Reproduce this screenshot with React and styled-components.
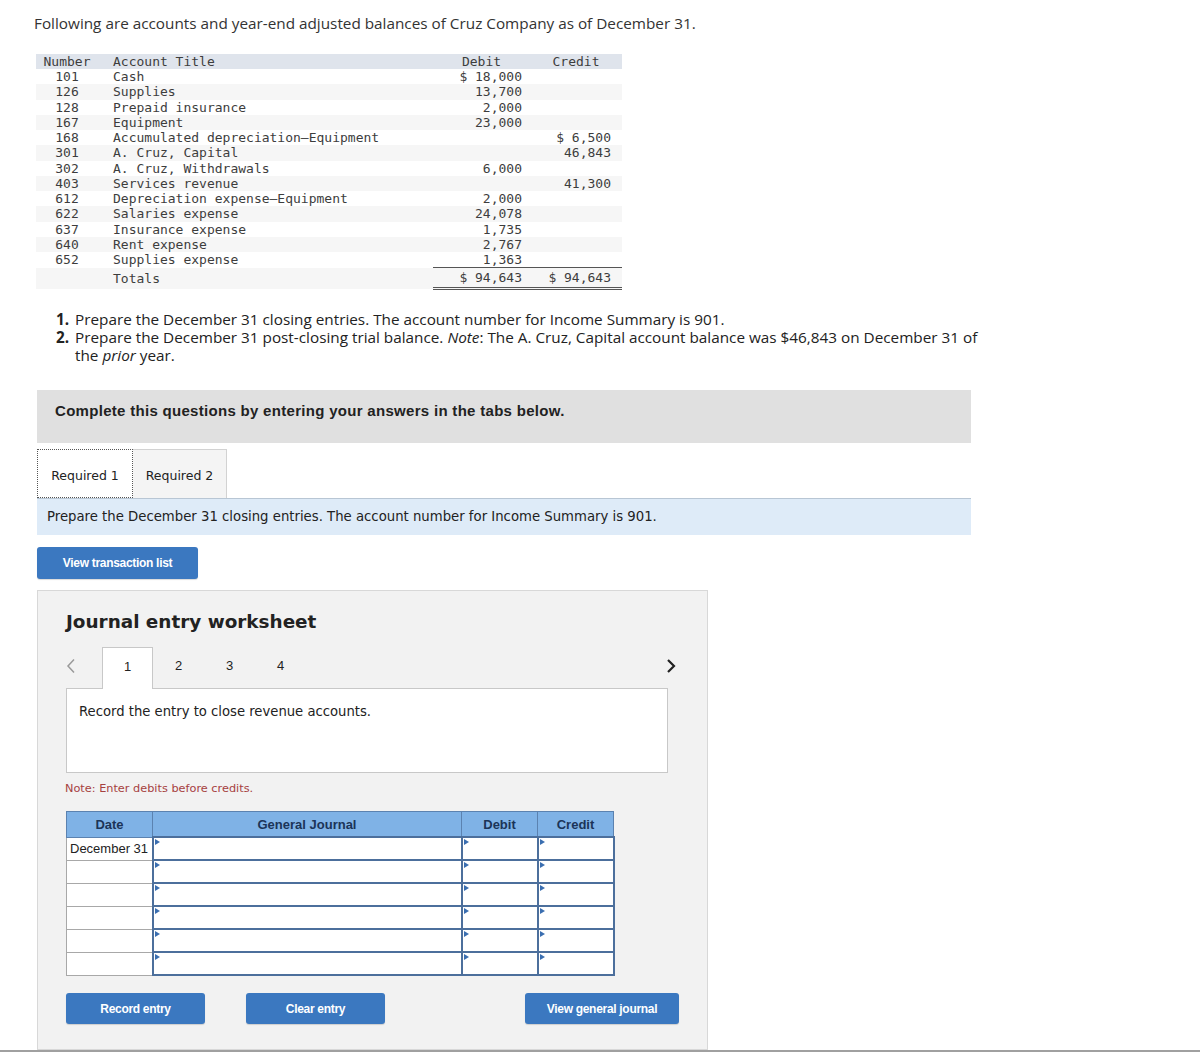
import React from "react";
import styled, { createGlobalStyle } from "styled-components";

const GlobalStyle = createGlobalStyle`
  html, body {
    margin: 0;
    padding: 0;
    background: #fff;
  }
  body {
    font-family: "Open Sans", "Liberation Sans", sans-serif;
    color: #333;
  }
`;

const accounts = [
  ["101", "Cash", "$ 18,000", ""],
  ["126", "Supplies", "13,700", ""],
  ["128", "Prepaid insurance", "2,000", ""],
  ["167", "Equipment", "23,000", ""],
  ["168", "Accumulated depreciation\u2014Equipment", "", "$ 6,500"],
  ["301", "A. Cruz, Capital", "", "46,843"],
  ["302", "A. Cruz, Withdrawals", "6,000", ""],
  ["403", "Services revenue", "", "41,300"],
  ["612", "Depreciation expense\u2014Equipment", "2,000", ""],
  ["622", "Salaries expense", "24,078", ""],
  ["637", "Insurance expense", "1,735", ""],
  ["640", "Rent expense", "2,767", ""],
  ["652", "Supplies expense", "1,363", ""],
];

const Page = styled.div`
  padding: 14px 0 0 37px;
  width: 934px;
`;

const Intro = styled.p`
  margin: 0 0 0 -3px;
  font-size: 15.3px;
  line-height: 18px;
  color: #333;
`;

const Trial = styled.table`
  margin: 22px 0 0 -1px;
  width: 586px;
  border-collapse: collapse;
  font-family: "DejaVu Sans Mono", "Liberation Mono", monospace;
  font-size: 13px;
  color: #3d3d3d;

  th,
  td {
    padding: 0;
    height: 15.25px;
    line-height: 15px;
    white-space: pre;
    font-weight: normal;
  }
  thead th {
    background: #dfe4ec;
    height: 15px;
  }
  tbody tr:nth-child(even) td {
    background: #f6f6f6;
  }
`;

const Cell = styled.td`
  text-align: ${(p) => (p.$kind === "num" || p.$kind === "head" ? "center" : p.$kind === "title" ? "left" : "right")};
  width: ${(p) => (p.$kind === "num" ? "62px" : p.$kind === "debit" ? "97px" : p.$kind === "credit" ? "92px" : "auto")};
  padding-left: ${(p) => (p.$kind === "title" ? "15px" : "0")} !important;
  padding-right: ${(p) => (p.$kind === "debit" ? "8px" : p.$kind === "credit" ? "11px" : "0")} !important;
  box-sizing: border-box;
`;

const TotalCell = styled(Cell)`
  height: 21px !important;
  border-top: 1px solid #555;
  border-bottom: 3px double #555;
`;

const TotalLabel = styled(Cell)`
  height: 21px !important;
`;

const Steps = styled.ol`
  list-style: none;
  margin: 20px 0 0 19px;
  padding: 0;
  width: 930px;
  font-size: 15.3px;
  line-height: 18px;
  color: #222;
`;

const Step = styled.li`
  display: grid;
  grid-template-columns: 19px 1fr;
`;

const StepNum = styled.b`
  font-weight: 700;
`;

const Banner = styled.div`
  margin-top: 26px;
  height: 53px;
  box-sizing: border-box;
  padding: 12px 18px 0;
  background: #e0e0e0;
  font-family: "Liberation Sans", Arial, sans-serif;
  font-weight: 700;
  font-size: 15px;
  letter-spacing: 0.3px;
  line-height: 18px;
  color: #222;
`;

const TabBar = styled.div`
  display: flex;
  margin-top: 6px;
`;

const ReqTab = styled.div`
  width: ${(p) => (p.$active ? "96px" : "94px")};
  height: 49px;
  box-sizing: border-box;
  display: flex;
  align-items: center;
  justify-content: center;
  padding-top: 3px;
  font-family: "DejaVu Sans", Verdana, sans-serif;
  font-size: 12.5px;
  color: #222;
  background: ${(p) => (p.$active ? "#fff" : "#f4f4f4")};
  border: ${(p) => (p.$active ? "1px dotted #555" : "1px solid #d2d2d2")};
  border-left: ${(p) => (p.$active ? "1px dotted #555" : "none")};
  border-bottom: ${(p) => (p.$active ? "1px dotted #555" : "none")};
`;

const InfoBar = styled.div`
  height: 37px;
  box-sizing: border-box;
  border-top: 1px solid #b8c6d4;
  background: #deebf8;
  padding-left: 10px;
  font-family: "DejaVu Sans", Verdana, sans-serif;
  font-size: 13.25px;
  line-height: 36px;
  color: #222;
`;

const ActionButton = styled.button`
  display: block;
  width: ${(p) => p.$w}px;
  height: ${(p) => p.$h || 31}px;
  margin-left: ${(p) => (p.$push ? "auto" : "0")};
  padding: 0;
  border: none;
  border-radius: 3px;
  background: #3b78c0;
  color: #fff;
  font-family: "Liberation Sans", Arial, sans-serif;
  font-weight: 700;
  font-size: 12px;
  letter-spacing: -0.3px;
  box-shadow: 0 1px 1px rgba(0, 0, 0, 0.15);
`;

const TopButton = styled(ActionButton)`
  margin-top: 12px;
`;

const Panel = styled.section`
  margin-top: 11px;
  width: 671px;
  box-sizing: border-box;
  background: #f2f2f2;
  border: 1px solid #d8d8d8;
  padding: 20px 28px 25px 28px;
`;

const PanelTitle = styled.h2`
  margin: 0;
  font-family: "DejaVu Sans", Verdana, sans-serif;
  font-size: 18.4px;
  line-height: 22px;
  font-weight: 700;
  color: #222;
`;

const NavRow = styled.div`
  display: flex;
  align-items: stretch;
  height: 41px;
  margin-top: 14px;
`;

const Arrow = styled.div`
  width: ${(p) => (p.$next ? "auto" : "36px")};
  margin-left: ${(p) => (p.$next ? "auto" : "0")};
  padding-right: ${(p) => (p.$next ? "3px" : "0")};
  padding-bottom: 4px;
  display: flex;
  align-items: center;
`;

const StepTab = styled.div`
  width: 51px;
  box-sizing: border-box;
  display: flex;
  align-items: center;
  justify-content: center;
  padding-bottom: 5px;
  font-family: "Liberation Sans", Arial, sans-serif;
  font-size: 13px;
  color: #222;
  position: relative;
  z-index: 1;
  background: ${(p) => (p.$active ? "#fff" : "transparent")};
  border: 1px solid ${(p) => (p.$active ? "#c8c8c8" : "transparent")};
  border-bottom: none;
  margin-bottom: ${(p) => (p.$active ? "-1px" : "0")};
`;

const EntryBox = styled.div`
  width: 602px;
  height: 85px;
  box-sizing: border-box;
  background: #fff;
  border: 1px solid #c8c8c8;
  padding: 14px 12px;
  font-family: "DejaVu Sans", Verdana, sans-serif;
  font-size: 13.2px;
  line-height: 18px;
  color: #222;
`;

const Note = styled.p`
  margin: 9px 0 0 -1px;
  font-family: "DejaVu Sans", Verdana, sans-serif;
  font-size: 11.3px;
  line-height: 14px;
  color: #a6413f;
`;

const Journal = styled.table`
  margin-top: 15px;
  width: 547px;
  border-collapse: collapse;
  font-family: "Liberation Sans", Arial, sans-serif;
  table-layout: fixed;

  th {
    height: 24px;
    padding: 0;
    background: #7fb2e6;
    border: 1px solid #5b82b0;
    color: #1b3458;
    font-size: 13px;
    font-weight: 700;
  }
  td {
    height: 21px;
    padding: 0;
    background: #fff;
  }
`;

const DateCell = styled.td`
  border: 1px solid #a8a8a8;
  padding-left: 3px !important;
  font-size: 13px;
  color: #222;
  text-align: left;
  white-space: nowrap;
`;

const EntryCell = styled.td`
  position: relative;
  border: 2px solid #4c6f9c;

  &::before {
    content: "";
    position: absolute;
    top: 1px;
    left: 1px;
    border-left: 5px solid #3a6eb0;
    border-top: 3px solid transparent;
    border-bottom: 3px solid transparent;
  }
`;

const ButtonRow = styled.div`
  display: flex;
  gap: 41px;
  margin-top: 17px;
`;

const BottomRule = styled.div`
  border-top: 2px solid #a0a0a0;
`;

const Chevron = ({ dir }) => (
  <svg width="10" height="16" viewBox="0 0 10 16">
    {dir === "left" ? (
      <polyline points="8,1.5 2,8 8,14.5" fill="none" stroke="#9a9a9a" strokeWidth="1.5" />
    ) : (
      <polyline points="2,2 8,8 2,14" fill="none" stroke="#222" strokeWidth="2.2" />
    )}
  </svg>
);

export default function App() {
  return (
    <>
      <GlobalStyle />
      <Page>
        <Intro>Following are accounts and year-end adjusted balances of Cruz Company as of December 31.</Intro>

        <Trial>
          <thead>
            <tr>
              <Cell as="th" $kind="num">Number</Cell>
              <Cell as="th" $kind="title">Account Title</Cell>
              <Cell as="th" $kind="head" style={{ width: 97 }}>Debit</Cell>
              <Cell as="th" $kind="head" style={{ width: 92 }}>Credit</Cell>
            </tr>
          </thead>
          <tbody>
            {accounts.map(([no, title, dr, cr]) => (
              <tr key={no}>
                <Cell $kind="num">{no}</Cell>
                <Cell $kind="title">{title}</Cell>
                <Cell $kind="debit">{dr}</Cell>
                <Cell $kind="credit">{cr}</Cell>
              </tr>
            ))}
            <tr>
              <TotalLabel $kind="num"></TotalLabel>
              <TotalLabel $kind="title">Totals</TotalLabel>
              <TotalCell $kind="debit">$ 94,643</TotalCell>
              <TotalCell $kind="credit">$ 94,643</TotalCell>
            </tr>
          </tbody>
        </Trial>

        <Steps>
          <Step>
            <StepNum>1.</StepNum>
            <span>Prepare the December 31 closing entries. The account number for Income Summary is 901.</span>
          </Step>
          <Step>
            <StepNum>2.</StepNum>
            <span>
              Prepare the December 31 post-closing trial balance. <i>Note</i>: The A. Cruz, Capital account
              balance was $46,843 on December 31 of the <i>prior</i> year.
            </span>
          </Step>
        </Steps>

        <Banner>Complete this questions by entering your answers in the tabs below.</Banner>

        <TabBar>
          <ReqTab $active>Required 1</ReqTab>
          <ReqTab>Required 2</ReqTab>
        </TabBar>
        <InfoBar>Prepare the December 31 closing entries. The account number for Income Summary is 901.</InfoBar>

        <TopButton $w={161} $h={32}>View transaction list</TopButton>

        <Panel>
          <PanelTitle>Journal entry worksheet</PanelTitle>
          <NavRow>
            <Arrow>
              <Chevron dir="left" />
            </Arrow>
            <StepTab $active>1</StepTab>
            <StepTab>2</StepTab>
            <StepTab>3</StepTab>
            <StepTab>4</StepTab>
            <Arrow $next>
              <Chevron dir="right" />
            </Arrow>
          </NavRow>
          <EntryBox>Record the entry to close revenue accounts.</EntryBox>
          <Note>Note: Enter debits before credits.</Note>

          <Journal>
            <colgroup>
              <col style={{ width: 86 }} />
              <col style={{ width: 309 }} />
              <col style={{ width: 76 }} />
              <col style={{ width: 76 }} />
            </colgroup>
            <thead>
              <tr>
                <th>Date</th>
                <th>General Journal</th>
                <th>Debit</th>
                <th>Credit</th>
              </tr>
            </thead>
            <tbody>
              {[0, 1, 2, 3, 4, 5].map((i) => (
                <tr key={i}>
                  <DateCell>{i === 0 ? "December 31" : ""}</DateCell>
                  <EntryCell />
                  <EntryCell />
                  <EntryCell />
                </tr>
              ))}
            </tbody>
          </Journal>

          <ButtonRow>
            <ActionButton $w={139}>Record entry</ActionButton>
            <ActionButton $w={139}>Clear entry</ActionButton>
            <ActionButton $w={154} $push>View general journal</ActionButton>
          </ButtonRow>
        </Panel>
      </Page>
      <BottomRule />
    </>
  );
}
